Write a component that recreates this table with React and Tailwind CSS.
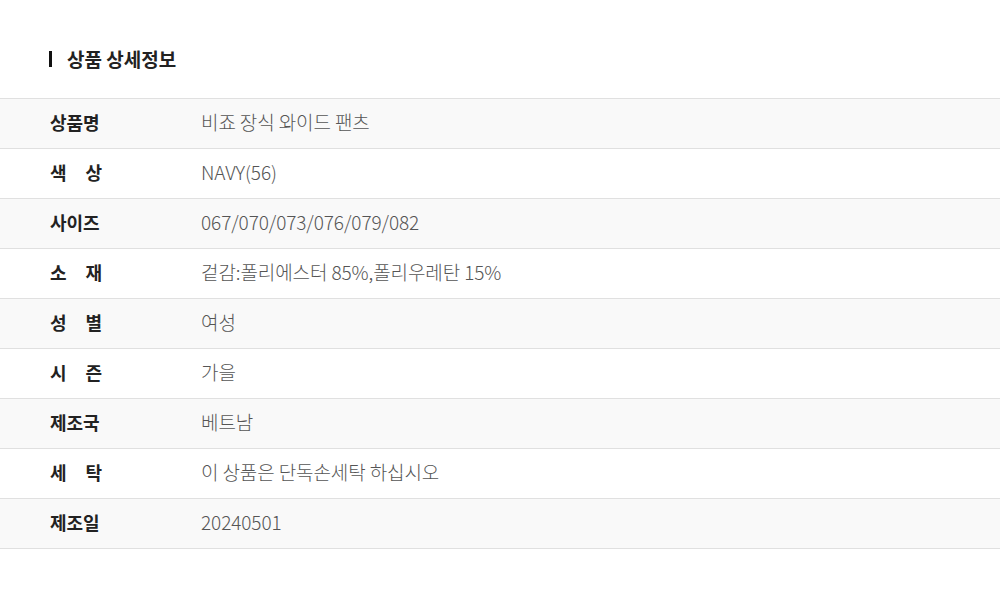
const ROWS = [
  { label: ['상품명'], value: '비죠 장식 와이드 팬츠' },
  { label: ['색', '상'], value: 'NAVY(56)' },
  { label: ['사이즈'], value: '067/070/073/076/079/082' },
  { label: ['소', '재'], value: '겉감:폴리에스터 85%,폴리우레탄 15%' },
  { label: ['성', '별'], value: '여성' },
  { label: ['시', '즌'], value: '가을' },
  { label: ['제조국'], value: '베트남' },
  { label: ['세', '탁'], value: '이 상품은 단독손세탁 하십시오' },
  { label: ['제조일'], value: '20240501' },
];

export default function App() {
  return (
    <div
      className="w-[1000px] h-[598px] bg-white"
      style={{ fontFamily: '"Noto Sans CJK KR", "Noto Sans", sans-serif' }}
    >
      <div className="pt-[48px] pb-[28px] pl-[49px] flex items-center">
        <span className="w-[3px] h-[16px] bg-[#111]" />
        <h2 className="ml-[15px] text-[19px] font-bold text-[#222] leading-[22px]">상품 상세정보</h2>
      </div>

      <div className="border-t border-[#e0e0e0]">
        {ROWS.map((row, i) => (
          <div
            key={i}
            className={`flex items-center h-[50px] border-b border-[#e0e0e0] ${i % 2 === 0 ? 'bg-[#f9f9f9]' : 'bg-white'}`}
          >
            <div className="w-[201px] pl-[50px] pb-[4px]">
              <div className="w-[52px] flex justify-between text-[18px] font-bold text-[#222] leading-none">
                {row.label.map((l, j) => <span key={j}>{l}</span>)}
              </div>
            </div>
            <div className="pb-[4px] text-[19px] font-light text-[#555] tracking-[-0.1px] leading-none">{row.value}</div>
          </div>
        ))}
      </div>
    </div>
  );
}
